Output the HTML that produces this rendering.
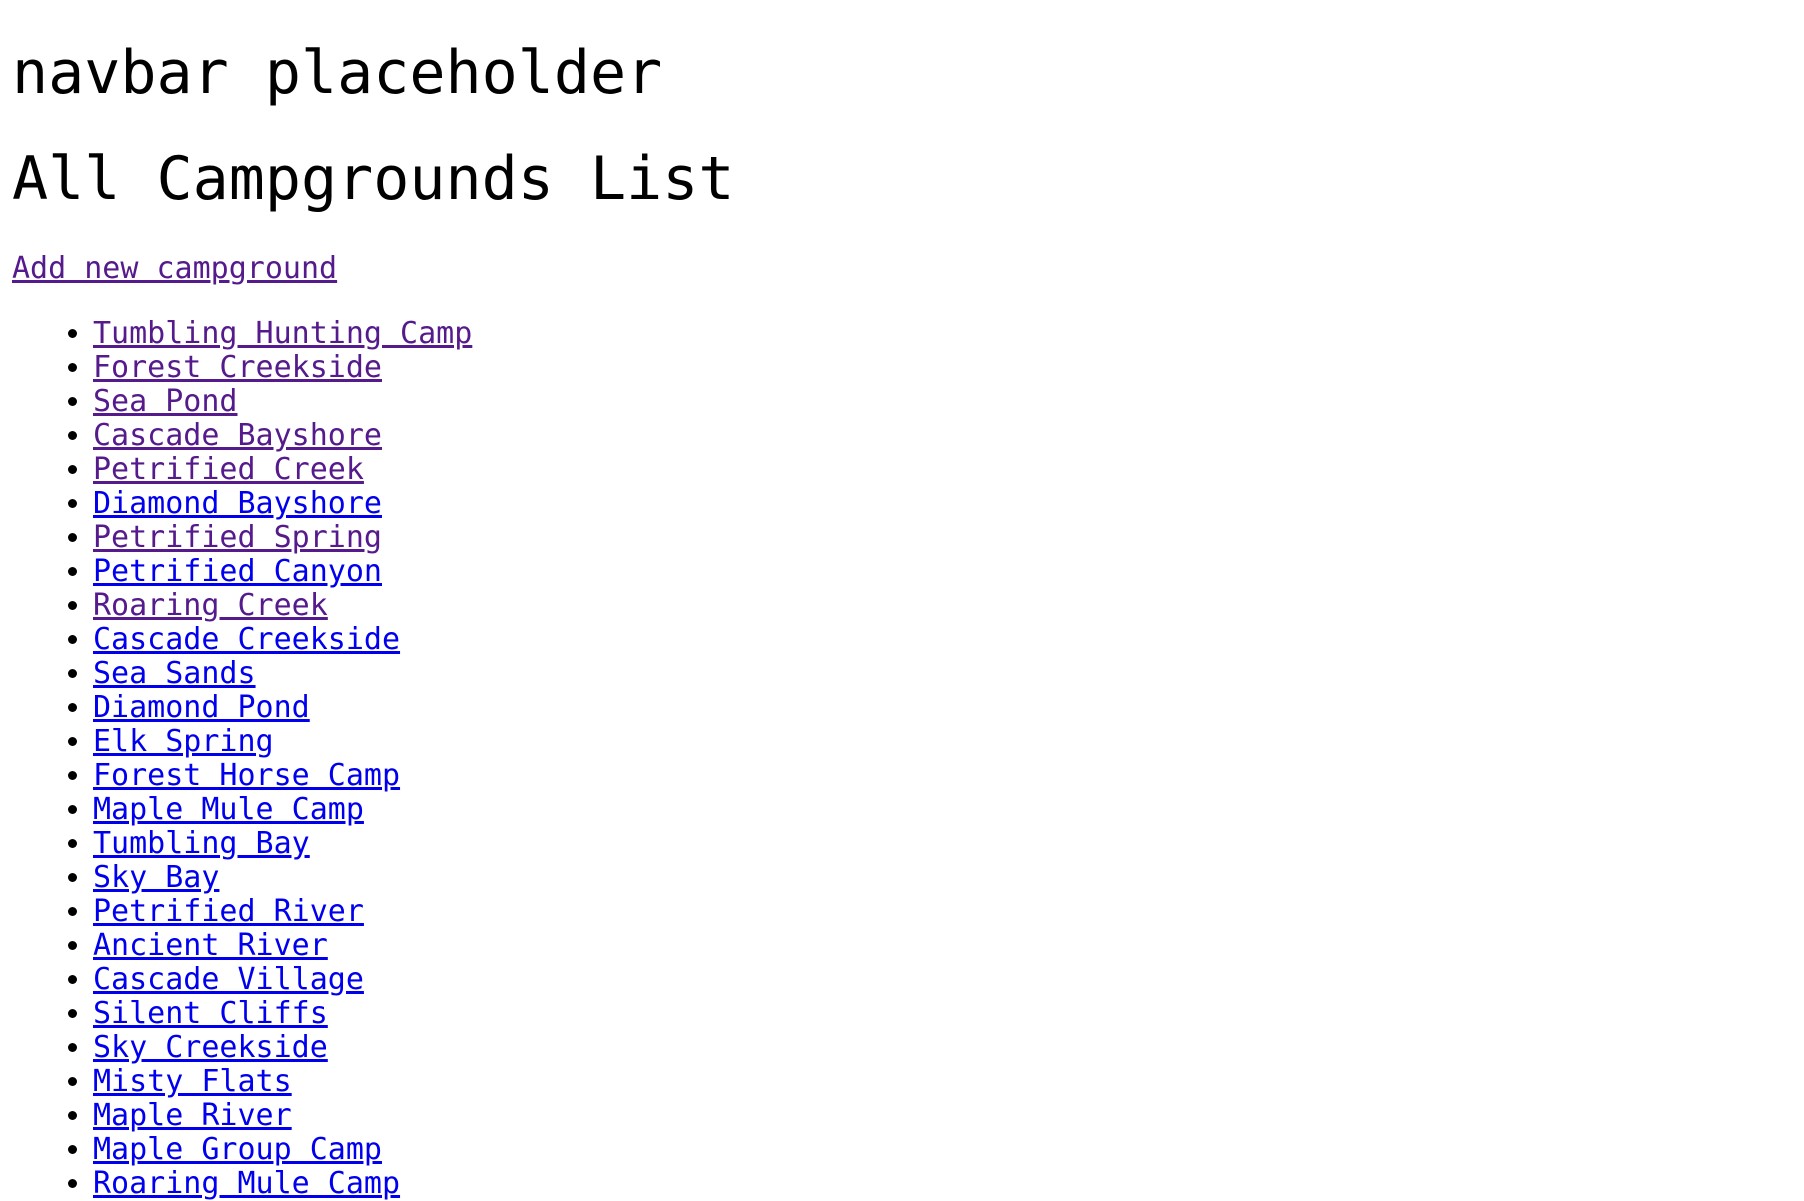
<!DOCTYPE html>
<html><head><meta charset="utf-8"><style>
html,body{margin:0;background:#fff}
body{padding:0 12px;font-family:"DejaVu Sans Mono","Liberation Mono",monospace;font-size:30px;color:#000}
h1{font-size:60px;font-weight:normal;line-height:70px;margin:0}
h1.first{margin-top:38px;margin-bottom:36px}
h1.second{margin-bottom:38px}
p{margin:0 0 31px 0;line-height:34px}
ul{margin:0;padding-left:81px;line-height:34px}
a{color:#0000ee;text-decoration:underline}
a.v{color:#551a8b}
</style></head><body>
<h1 class="first">navbar placeholder</h1>
<h1 class="second">All Campgrounds List</h1>
<p><a class="v">Add new campground</a></p>
<ul>
<li><a class="v">Tumbling Hunting Camp</a></li>
<li><a class="v">Forest Creekside</a></li>
<li><a class="v">Sea Pond</a></li>
<li><a class="v">Cascade Bayshore</a></li>
<li><a class="v">Petrified Creek</a></li>
<li><a>Diamond Bayshore</a></li>
<li><a class="v">Petrified Spring</a></li>
<li><a>Petrified Canyon</a></li>
<li><a class="v">Roaring Creek</a></li>
<li><a>Cascade Creekside</a></li>
<li><a>Sea Sands</a></li>
<li><a>Diamond Pond</a></li>
<li><a>Elk Spring</a></li>
<li><a>Forest Horse Camp</a></li>
<li><a>Maple Mule Camp</a></li>
<li><a>Tumbling Bay</a></li>
<li><a>Sky Bay</a></li>
<li><a>Petrified River</a></li>
<li><a>Ancient River</a></li>
<li><a>Cascade Village</a></li>
<li><a>Silent Cliffs</a></li>
<li><a>Sky Creekside</a></li>
<li><a>Misty Flats</a></li>
<li><a>Maple River</a></li>
<li><a>Maple Group Camp</a></li>
<li><a>Roaring Mule Camp</a></li>
</ul>
</body></html>
